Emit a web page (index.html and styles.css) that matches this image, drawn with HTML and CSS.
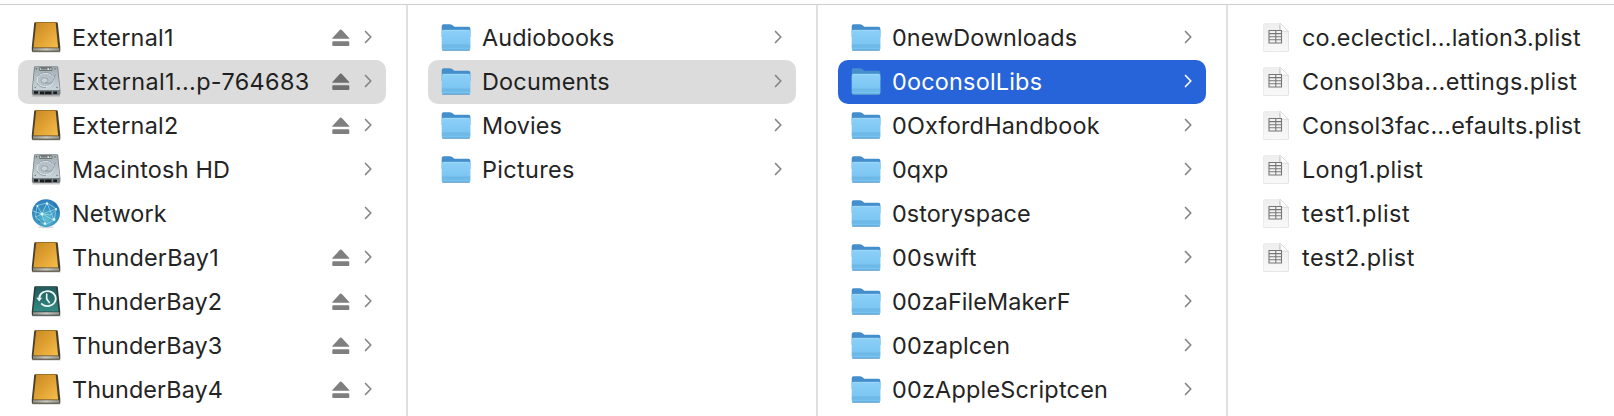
FILE: index.html
```html
<!DOCTYPE html>
<html lang="en">
<head>
<meta charset="utf-8">
<title>Finder</title>
<link rel="stylesheet" href="styles.css">
</head>
<body>
<svg class="defs" aria-hidden="true">
  <defs>
    <linearGradient id="gold" x1="0" y1="0" x2="1" y2="1"><stop offset="0" stop-color="#c68a22"/><stop offset=".5" stop-color="#e0a133"/><stop offset="1" stop-color="#f6bd4c"/></linearGradient>
    <linearGradient id="teal" x1="0" y1="0" x2="0" y2="1"><stop offset="0" stop-color="#205b5a"/><stop offset="1" stop-color="#348b84"/></linearGradient>
    <linearGradient id="edge" x1="0" y1="0" x2="1" y2="0"><stop offset="0" stop-color="#8e8e88"/><stop offset=".5" stop-color="#c9c8c1"/><stop offset="1" stop-color="#96958f"/></linearGradient>
    <linearGradient id="steel" x1="0" y1="0" x2="0" y2="1"><stop offset="0" stop-color="#a3adb2"/><stop offset="1" stop-color="#c8d3da"/></linearGradient>
    <linearGradient id="front" x1="0" y1="0" x2="0" y2="1"><stop offset="0" stop-color="#8bd0f8"/><stop offset="1" stop-color="#76c1f0"/></linearGradient>
    <radialGradient id="globe" cx=".5" cy=".72" r=".75"><stop offset="0" stop-color="#62c2d2"/><stop offset=".5" stop-color="#3a93c1"/><stop offset="1" stop-color="#2f7cbd"/></radialGradient>
    <linearGradient id="paper" x1="0" y1="0" x2="0" y2="1"><stop offset="0" stop-color="#eeeeee"/><stop offset="1" stop-color="#f8f8f8"/></linearGradient>
  </defs>
  <symbol id="drive" viewBox="0 0 32 32">
    <path d="M2 29.5h28.500v1H2z" fill="#000" opacity=".22"/>
    <path d="M5.200.2h21.600q.8 0 1 .8L30.300 25v3.500q0 1.200-1.200 1.200H3q-1.200 0-1.200-1.200V25L4.200 1q.2-.8 1-.8z" fill="#49402d"/>
    <path d="M6.200.6h19.400l2.500 24.800H3.500z" fill="url(#gold)"/>
    <path d="M5.800.2h20v.8h-20z" fill="#9a6d20"/>
    <path d="M3 26.200h26.200v2.500H3z" fill="url(#edge)"/>
  </symbol>
  <symbol id="backup" viewBox="0 0 32 32">
    <path d="M2 29.500h28.500v1H2z" fill="#000" opacity=".22"/>
    <path d="M5.200.2h21.600q.8 0 1 .8L30.200 25v3.500q0 1.200-1.200 1.200H3q-1.200 0-1.200-1.200V25L4.200 1q.2-.8 1-.8z" fill="#2b3e3c"/>
    <path d="M6 .8h20l2.500 24.600H3.200z" fill="url(#teal)"/>
    <path d="M3 26.200h26.200v2.500H3z" fill="url(#edge)"/>
    <path d="M9.200 12.400a8.300 7.500 0 1 1 2.500 5.600" fill="none" stroke="#eefaf8" stroke-width="1.700" stroke-linecap="round"/>
    <path d="M6.300 11.800h5.800l-2.900 3.700z" fill="#eefaf8"/>
    <path d="M16.700 8v5l2.600 3.500" fill="none" stroke="#eefaf8" stroke-width="1.600" stroke-linecap="round"/>
  </symbol>
  <symbol id="disk" viewBox="0 0 32 32">
    <path d="M2.500 29h27.500v1.500H2.500z" fill="#000" opacity=".22"/>
    <path d="M5.500.2h21.200q1.300 0 1.500 1.200L30.400 24v3.600q0 1.400-1.400 1.400H3.300q-1.400 0-1.400-1.400V24L4 1.400Q4.200.2 5.500.2z" fill="#777f83"/>
    <path d="M6 .8h20.200q1 0 1.100 1l2.400 21q.1 1.200-1 1.200H3.800q-1.200 0-1.100-1.200L4.900 1.800q.1-1 1.100-1z" fill="url(#steel)"/>
    <path d="M9.700 1.600h12.200v2.900H9.700z" fill="#dce2e4" stroke="#555d61" stroke-width=".8"/>
    <path d="M11 2.900h6.500M19 2.900h1.500" stroke="#333" stroke-width="1"/>
    <ellipse cx="15.500" cy="14" rx="8.400" ry="6.800" fill="#b5c1c8" stroke="#dce6eb" stroke-width="1"/>
    <path d="M8 10q3-4 8-3.700 5 .2 7 4.200M7 17q3 5 9 4.500" fill="none" stroke="#8c989f" stroke-width=".8"/>
    <ellipse cx="14.500" cy="14.500" rx="3.400" ry="2.800" fill="#c8d1d6" stroke="#8d999f" stroke-width=".8"/>
    <path d="M15 16.500q5 1.800 7.500-.5l3-7.500" fill="none" stroke="#8d999f" stroke-width=".9"/>
    <circle cx="6.500" cy="2.800" r=".7" fill="#59646a"/><circle cx="25" cy="2.800" r=".7" fill="#59646a"/>
    <circle cx="5.200" cy="21.500" r=".7" fill="#657178"/><circle cx="27" cy="21.500" r=".7" fill="#657178"/>
    <path d="M4 25.200h4v2.600H4zM10 25.400h11.500v2.800H10zM23.300 25.400h3.700v2.600h-3.700z" fill="#17191a"/>
    <path d="M14.500 25.400v2.800" stroke="#777" stroke-width=".8"/>
  </symbol>
  <symbol id="network" viewBox="0 0 32 32">
    <ellipse cx="16" cy="29.200" rx="8" ry="1" fill="#000" opacity=".15"/>
    <circle cx="16" cy="15.200" r="14" fill="url(#globe)"/>
    <path d="M5 9q3 4 2 10M24 5q4 5 3 10M8 24q4-2 8 2" fill="none" stroke="#1d629f" stroke-width="2.500" opacity=".4"/>
    <g fill="none" stroke="#a9e9ed" stroke-width=".9" opacity=".7">
      <path d="M7 7.500 17 5l9.500 6L24 22l-9 5-9.500-8zM17 5l-5 11 3 11M17 5l7 17M7 7.500l5 8.500 14.500-5M12 16l12 6M5.500 19l6.500-3M12 16l9 1 5.500-6M3 13l9 3"/>
    </g>
    <g fill="#d8fbfa"><circle cx="17" cy="5.500" r="1.200"/><circle cx="12" cy="16" r="1.500"/><circle cx="24" cy="21.500" r="1.400"/><circle cx="26" cy="11" r="1.100"/><circle cx="15" cy="25.500" r="1.200"/><circle cx="7.500" cy="8" r=".9"/></g>
  </symbol>
  <symbol id="folder" viewBox="0 0 32 32">
    <path d="M2 26.800h28v1.100q0 1.200-1.500 1.200h-25Q2 29.100 2 27.900z" fill="#5b7488" opacity=".45"/>
    <path d="M1.700 4.200q0-2 2-2h6.200q1.100 0 1.900.6l2 1.500q.6.500 1.600.5h13q2 0 2 2V15H1.700z" fill="#438ecb"/>
    <path d="M1.700 9.800q0-1.900 2-1.900h24.700q2 0 2 1.900v16.700q0 1.900-2 1.900H3.700q-2 0-2-1.900z" fill="url(#front)"/>
    <path d="M2.500 8.300h27" stroke="#a6dcfa" stroke-width=".8"/>
    <path d="M1.900 23.200h28.300M1.900 25h28.300" stroke="#5ca9d9" stroke-width=".7"/>
    <path d="M2.600 28h27" stroke="#579dcc" stroke-width=".8"/>
  </symbol>
  <symbol id="plist" viewBox="0 0 32 32">
    <path d="M4.800 1.200h15.500l8.600 8.200v18.500q0 1.900-1.700 1.900H4.900q-1.700 0-1.700-1.900V2.900q0-1.700 1.600-1.700z" fill="#000" opacity=".16"/>
    <path d="M5 1h14.900l8.400 8.200v18.400q0 1.600-1.600 1.600H5q-1.600 0-1.600-1.600V2.600Q3.400 1 5 1z" fill="url(#paper)"/>
    <path d="M19.900 1v6.500q0 1.700 1.700 1.700h6.700z" fill="#fff" stroke="#d2d2d2" stroke-width=".7"/>
    <path d="M20 3v5.200" fill="none" stroke="#aaa" stroke-width=".6"/>
    <path d="M9 8.500h12.500v12.500H9zM9 11.600h12.500M9 14.700h12.500M9 17.800h12.500M15.800 8.500v12.500" fill="none" stroke="#777" stroke-width="1.100"/>
  </symbol>
  <symbol id="eject" viewBox="0 0 18 18">
    <path d="M8 .8q.8-.8 1.600 0l7.400 8q.9 1-.5 1H1.100q-1.400 0-.5-1zM1.300 12.300h15q1 0 1 1v2.600q0 1-1 1h-15q-1 0-1-1v-2.600q0-1 1-1z"/>
  </symbol>
  <symbol id="chevron" viewBox="0 0 8 14">
    <path d="m1.500 1.500 5.300 5.500-5.300 5.500" fill="none" stroke="currentColor" stroke-width="1.700" stroke-linecap="round" stroke-linejoin="round"/>
  </symbol>
</svg>
<main class="browser">
  <ul class="column column-first">
    <li class="row"><svg class="icon"><use href="#drive"/></svg><span class="name">External1</span><svg class="eject"><use href="#eject"/></svg><svg class="chevron"><use href="#chevron"/></svg></li>
    <li class="row selected"><svg class="icon"><use href="#disk"/></svg><span class="name wide">External1...p-764683</span><svg class="eject"><use href="#eject"/></svg><svg class="chevron"><use href="#chevron"/></svg></li>
    <li class="row"><svg class="icon"><use href="#drive"/></svg><span class="name">External2</span><svg class="eject"><use href="#eject"/></svg><svg class="chevron"><use href="#chevron"/></svg></li>
    <li class="row"><svg class="icon"><use href="#disk"/></svg><span class="name">Macintosh HD</span><svg class="chevron"><use href="#chevron"/></svg></li>
    <li class="row"><svg class="icon"><use href="#network"/></svg><span class="name tight">Network</span><svg class="chevron"><use href="#chevron"/></svg></li>
    <li class="row"><svg class="icon"><use href="#drive"/></svg><span class="name">ThunderBay1</span><svg class="eject"><use href="#eject"/></svg><svg class="chevron"><use href="#chevron"/></svg></li>
    <li class="row"><svg class="icon"><use href="#backup"/></svg><span class="name tight">ThunderBay2</span><svg class="eject"><use href="#eject"/></svg><svg class="chevron"><use href="#chevron"/></svg></li>
    <li class="row"><svg class="icon"><use href="#drive"/></svg><span class="name tight">ThunderBay3</span><svg class="eject"><use href="#eject"/></svg><svg class="chevron"><use href="#chevron"/></svg></li>
    <li class="row"><svg class="icon"><use href="#drive"/></svg><span class="name tight">ThunderBay4</span><svg class="eject"><use href="#eject"/></svg><svg class="chevron"><use href="#chevron"/></svg></li>
  </ul>
  <ul class="column">
    <li class="row"><svg class="icon"><use href="#folder"/></svg><span class="name tight">Audiobooks</span><svg class="chevron"><use href="#chevron"/></svg></li>
    <li class="row selected"><svg class="icon"><use href="#folder"/></svg><span class="name">Documents</span><svg class="chevron"><use href="#chevron"/></svg></li>
    <li class="row"><svg class="icon"><use href="#folder"/></svg><span class="name tight">Movies</span><svg class="chevron"><use href="#chevron"/></svg></li>
    <li class="row"><svg class="icon"><use href="#folder"/></svg><span class="name wide">Pictures</span><svg class="chevron"><use href="#chevron"/></svg></li>
  </ul>
  <ul class="column">
    <li class="row"><svg class="icon"><use href="#folder"/></svg><span class="name tight">0newDownloads</span><svg class="chevron"><use href="#chevron"/></svg></li>
    <li class="row active"><svg class="icon"><use href="#folder"/></svg><span class="name">0oconsolLibs</span><svg class="chevron"><use href="#chevron"/></svg></li>
    <li class="row"><svg class="icon"><use href="#folder"/></svg><span class="name">0OxfordHandbook</span><svg class="chevron"><use href="#chevron"/></svg></li>
    <li class="row"><svg class="icon"><use href="#folder"/></svg><span class="name tight">0qxp</span><svg class="chevron"><use href="#chevron"/></svg></li>
    <li class="row"><svg class="icon"><use href="#folder"/></svg><span class="name tight">0storyspace</span><svg class="chevron"><use href="#chevron"/></svg></li>
    <li class="row"><svg class="icon"><use href="#folder"/></svg><span class="name wide">00swift</span><svg class="chevron"><use href="#chevron"/></svg></li>
    <li class="row"><svg class="icon"><use href="#folder"/></svg><span class="name tight">00zaFileMakerF</span><svg class="chevron"><use href="#chevron"/></svg></li>
    <li class="row"><svg class="icon"><use href="#folder"/></svg><span class="name">00zaplcen</span><svg class="chevron"><use href="#chevron"/></svg></li>
    <li class="row"><svg class="icon"><use href="#folder"/></svg><span class="name">00zAppleScriptcen</span><svg class="chevron"><use href="#chevron"/></svg></li>
  </ul>
  <ul class="column column-last">
    <li class="row"><svg class="icon"><use href="#plist"/></svg><span class="name">co.eclecticl...lation3.plist</span></li>
    <li class="row"><svg class="icon"><use href="#plist"/></svg><span class="name wide">Consol3ba...ettings.plist</span></li>
    <li class="row"><svg class="icon"><use href="#plist"/></svg><span class="name">Consol3fac...efaults.plist</span></li>
    <li class="row"><svg class="icon"><use href="#plist"/></svg><span class="name wide">Long1.plist</span></li>
    <li class="row"><svg class="icon"><use href="#plist"/></svg><span class="name wider">test1.plist</span></li>
    <li class="row"><svg class="icon"><use href="#plist"/></svg><span class="name wider">test2.plist</span></li>
  </ul>
</main>
</body>
</html>
```
FILE: styles.css
```css
* { box-sizing: border-box; }
body {
  margin: 0;
  padding-top: 4px;
  height: 416px;
  overflow: hidden;
  background: #fff;
  color: #242424;
  font-family: Inter, "Liberation Sans", sans-serif;
  font-size: 23.4px;
}
.defs { display: block; width: 0; height: 0; }
.browser {
  display: flex;
  height: 412px;
  border-top: 1px solid #cfcfcf;
}
.column {
  flex: none;
  width: 410px;
  margin: 0;
  padding: 11px 20px 0;
  list-style: none;
  border-right: 2px solid #e0e0e0;
}
.column-first { width: 408px; padding-left: 18px; }
.column-last { width: 386px; padding-right: 0; border-right: 0; }
.row {
  display: flex;
  align-items: center;
  height: 44px;
  padding: 0 14px 0 12px;
  border-radius: 10px;
}
.selected { background: #dcdcdc; color: #1f1f1f; }
.active { background: #2864d9; color: #fff; }
.icon { flex: none; width: 32px; height: 32px; margin-right: 10px; }
.name {
  flex: 1;
  min-width: 0;
  white-space: nowrap;
  line-height: 44px;
  letter-spacing: .22px;
}
.name.tight { letter-spacing: .08px; }
.name.wide { letter-spacing: .36px; }
.name.wider { letter-spacing: .46px; }
.eject { flex: none; width: 18px; height: 18px; margin-right: 14px; fill: #7f7f7f; }
.selected .eject { fill: #6e6e6e; }
.chevron { flex: none; width: 8px; height: 14px; margin-bottom: 2px; color: #858585; }
.active .chevron { color: #fff; }
```
